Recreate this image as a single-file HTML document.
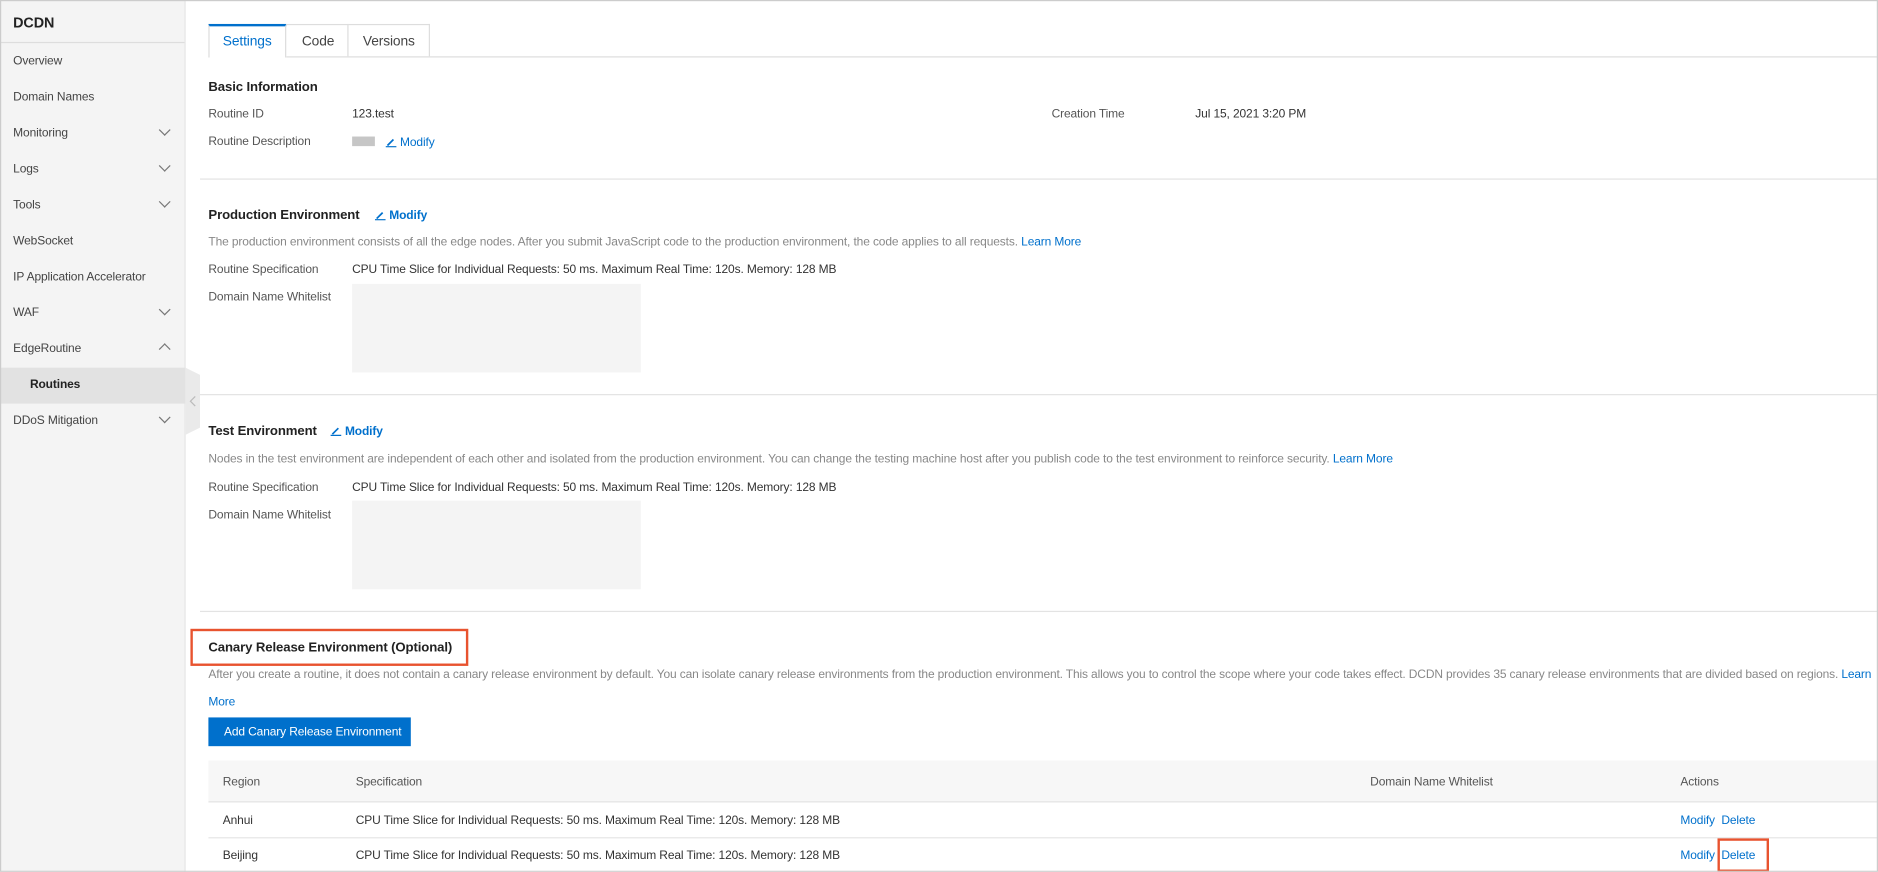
<!DOCTYPE html>
<html><head><meta charset="utf-8"><style>
*{margin:0;padding:0;box-sizing:border-box}
html,body{width:1878px;height:872px;overflow:hidden;background:#fff}
#w{position:absolute;left:0;top:0;width:1568px;height:728px;transform:scale(1.19770);transform-origin:0 0;font-family:"Liberation Sans",sans-serif;font-size:10px;color:#333;letter-spacing:-0.1px;overflow:hidden}
.a{position:absolute;white-space:nowrap;line-height:12px;margin-top:1px}
.sb{position:absolute;left:0;top:0;width:155px;height:728px;background:#f4f4f4;border-right:1px solid #e6e6e6}
.mi{position:absolute;left:11px;color:#444}
.ch{position:absolute;left:134px;width:7px;height:7px;border-right:1.2px solid #777;border-bottom:1.2px solid #777;transform:rotate(45deg)}
.up{transform:rotate(-135deg)}
.h{font-weight:bold;font-size:11px;color:#222}
.lb{color:#555}
.g{color:#888}
.bl{color:#0070cc}
.line{position:absolute;left:167px;right:0;height:1px;background:#e3e3e3}
.box{position:absolute;left:294px;width:241px;background:#f4f4f4}
.pen{display:inline-block;width:9px;height:9px;position:relative;vertical-align:-1px;margin-right:3px}
</style></head><body><div id="w">
<div style="position:absolute;inset:0;border:1px solid #ccc;z-index:5;pointer-events:none"></div>
<div class="sb">
<div class="a" style="left:11px;top:12px;font-weight:bold;font-size:12px;color:#222">DCDN</div>
<div style="position:absolute;left:0;right:0;top:35px;height:1px;background:#ddd"></div>
<div class="a mi" style="top:45px">Overview</div>
<div class="a mi" style="top:75px">Domain Names</div>
<div class="a mi" style="top:105px">Monitoring</div><div class="ch" style="top:105px"></div>
<div class="a mi" style="top:135px">Logs</div><div class="ch" style="top:135px"></div>
<div class="a mi" style="top:165px">Tools</div><div class="ch" style="top:165px"></div>
<div class="a mi" style="top:195px">WebSocket</div>
<div class="a mi" style="top:225px">IP Application Accelerator</div>
<div class="a mi" style="top:255px">WAF</div><div class="ch" style="top:255px"></div>
<div class="a mi" style="top:285px">EdgeRoutine</div><div class="ch up" style="top:288px"></div>
<div style="position:absolute;left:0;top:307px;width:155px;height:30px;background:#e2e2e2"></div>
<div class="a" style="left:25px;top:315px;font-weight:bold;color:#222">Routines</div>
<div class="a mi" style="top:345px">DDoS Mitigation</div><div class="ch" style="top:345px"></div>
</div>
<svg style="position:absolute;left:155px;top:307px" width="13" height="56"><polygon points="0,0 12,6 12,50 0,56" fill="#eaeaea"/><polyline points="8,24 4,28 8,32" fill="none" stroke="#bbb" stroke-width="1"/></svg>

<div style="position:absolute;left:174px;top:47px;right:0;height:1px;background:#ddd"></div>
<div style="position:absolute;left:174px;top:20px;width:65px;height:28px;border:1px solid #ddd;border-top:2px solid #0070cc;border-bottom:none;background:#fff"></div>
<div style="position:absolute;left:239px;top:20px;width:52px;height:27px;border:1px solid #ddd;border-left:none;border-bottom:none"></div>
<div style="position:absolute;left:291px;top:20px;width:68px;height:27px;border:1px solid #ddd;border-left:none;border-bottom:none"></div>
<div class="a bl" style="left:186px;top:28px;font-size:11.5px">Settings</div>
<div class="a" style="left:252px;top:28px;font-size:11.5px;color:#444">Code</div>
<div class="a" style="left:303px;top:28px;font-size:11.5px;color:#444">Versions</div>

<div class="a h" style="left:174px;top:66px">Basic Information</div>
<div class="a lb" style="left:174px;top:89px">Routine ID</div>
<div class="a" style="left:294px;top:89px">123.test</div>
<div class="a lb" style="left:878px;top:89px">Creation Time</div>
<div class="a" style="left:998px;top:89px">Jul 15, 2021 3:20 PM</div>
<div class="a lb" style="left:174px;top:112px">Routine Description</div>
<div style="position:absolute;left:294px;top:114px;width:19px;height:8px;background:#b8b8b8;opacity:.8"></div>
<div class="a bl" style="left:322px;top:113px"><svg class="pen" viewBox="0 0 9 9"><path d="M1 7 L6 2 L7 3 L2 8 Z" fill="#0070cc"/><path d="M0 8.5 H9" stroke="#0070cc"/></svg>Modify</div>
<div class="line" style="top:149px"></div>

<div class="a h" style="left:174px;top:173px">Production Environment</div>
<div class="a bl" style="left:313px;top:174px;font-weight:bold"><svg class="pen" viewBox="0 0 9 9"><path d="M1 7 L6 2 L7 3 L2 8 Z" fill="#0070cc"/><path d="M0 8.5 H9" stroke="#0070cc"/></svg>Modify</div>
<div class="a g" style="left:174px;top:196px">The production environment consists of all the edge nodes. After you submit JavaScript code to the production environment, the code applies to all requests. <span class="bl">Learn More</span></div>
<div class="a lb" style="left:174px;top:219px">Routine Specification</div>
<div class="a" style="left:294px;top:219px">CPU Time Slice for Individual Requests: 50 ms. Maximum Real Time: 120s. Memory: 128 MB</div>
<div class="a lb" style="left:174px;top:242px">Domain Name Whitelist</div>
<div class="box" style="top:237px;height:74px"></div>
<div class="line" style="top:329px"></div>

<div class="a h" style="left:174px;top:353px">Test Environment</div>
<div class="a bl" style="left:276px;top:354px;font-weight:bold"><svg class="pen" viewBox="0 0 9 9"><path d="M1 7 L6 2 L7 3 L2 8 Z" fill="#0070cc"/><path d="M0 8.5 H9" stroke="#0070cc"/></svg>Modify</div>
<div class="a g" style="left:174px;top:377px">Nodes in the test environment are independent of each other and isolated from the production environment. You can change the testing machine host after you publish code to the test environment to reinforce security. <span class="bl">Learn More</span></div>
<div class="a lb" style="left:174px;top:401px">Routine Specification</div>
<div class="a" style="left:294px;top:401px">CPU Time Slice for Individual Requests: 50 ms. Maximum Real Time: 120s. Memory: 128 MB</div>
<div class="a lb" style="left:174px;top:424px">Domain Name Whitelist</div>
<div class="box" style="top:418px;height:74px"></div>
<div class="line" style="top:510px"></div>

<div style="position:absolute;left:159px;top:525px;width:232px;height:31px;border:2px solid #e8532f"></div>
<div class="a h" style="left:174px;top:534px">Canary Release Environment (Optional)</div>
<div class="a g" style="left:174px;top:557px;letter-spacing:-0.12px">After you create a routine, it does not contain a canary release environment by default. You can isolate canary release environments from the production environment. This allows you to control the scope where your code takes effect. DCDN provides 35 canary release environments that are divided based on regions. <span class="bl">Learn</span></div>
<div class="a bl" style="left:174px;top:580px">More</div>
<div style="position:absolute;left:174px;top:599px;width:169px;height:24px;background:#0070cc"></div>
<div class="a" style="left:187px;top:605px;color:#fff">Add Canary Release Environment</div>

<div style="position:absolute;left:174px;top:635px;right:0;height:35px;background:#f7f7f7;border-bottom:1px solid #e3e3e3"></div>
<div class="a lb" style="left:186px;top:647px">Region</div>
<div class="a lb" style="left:297px;top:647px">Specification</div>
<div class="a lb" style="left:1144px;top:647px">Domain Name Whitelist</div>
<div class="a lb" style="left:1403px;top:647px">Actions</div>
<div class="a" style="left:186px;top:679px">Anhui</div>
<div class="a" style="left:297px;top:679px">CPU Time Slice for Individual Requests: 50 ms. Maximum Real Time: 120s. Memory: 128 MB</div>
<div class="a bl" style="left:1403px;top:679px">Modify&nbsp;&nbsp;Delete</div>
<div style="position:absolute;left:174px;top:699px;right:0;height:1px;background:#e6e6e6"></div>
<div class="a" style="left:186px;top:708px">Beijing</div>
<div class="a" style="left:297px;top:708px">CPU Time Slice for Individual Requests: 50 ms. Maximum Real Time: 120s. Memory: 128 MB</div>
<div class="a bl" style="left:1403px;top:708px">Modify&nbsp;&nbsp;Delete</div>
<div style="position:absolute;left:1434px;top:700px;width:43px;height:28px;border:2px solid #e8532f"></div>
</div></body></html>
